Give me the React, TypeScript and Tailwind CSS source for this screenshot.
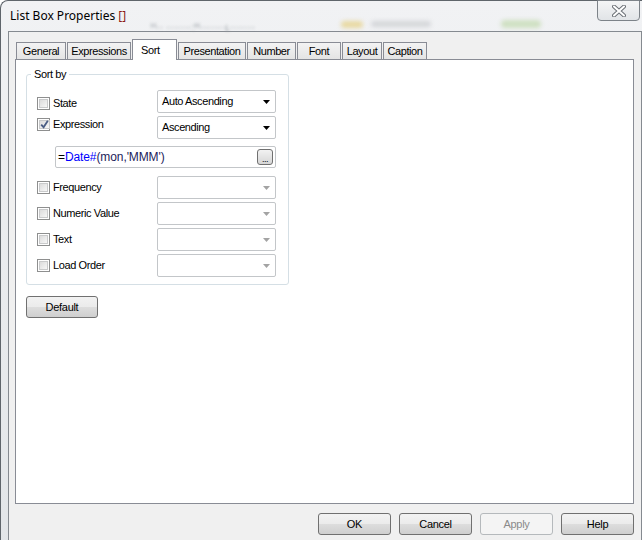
import React from 'react';

const ui = { fontFamily: '"Liberation Sans", Arial, sans-serif' };

const tabs = [
  { label: 'General', w: 'w-[50px]' },
  { label: 'Expressions', w: 'w-[64px]' },
  { label: 'Sort', w: 'w-[45px]', active: true },
  { label: 'Presentation', w: 'w-[68px]' },
  { label: 'Number', w: 'w-[49px]' },
  { label: 'Font', w: 'w-[44px]' },
  { label: 'Layout', w: 'w-[40px]' },
  { label: 'Caption', w: 'w-[44px]' },
];

function Checkbox({ checked }: { checked?: boolean }) {
  return (
    <span className="w-[13px] h-[13px] border border-[#8e8f8f] bg-white p-px shrink-0 flex">
      <span className="flex-1 flex items-center justify-center border border-[#c9cacb] bg-gradient-to-br from-[#dcdcdc] to-[#f7f7f7]">
        {checked && (
          <svg width="9" height="9" viewBox="0 0 9 9">
            <path d="M1.2 4.6 L3.6 7.2 L7.8 0.8" fill="none" stroke="#4a5d84" strokeWidth="1.8" />
          </svg>
        )}
      </span>
    </span>
  );
}

function CheckRow({ label, checked }: { label: string; checked?: boolean }) {
  return (
    <div className="flex items-center gap-[3px] h-[13px]">
      <Checkbox checked={checked} />
      <span className="text-[11px] tracking-[-0.4px] leading-[13px] text-black">{label}</span>
    </div>
  );
}

function Combo({ value, disabled }: { value?: string; disabled?: boolean }) {
  return (
    <div className="w-[119px] h-[23px] border border-[#c3c6c9] rounded-[2px] bg-white flex items-center pl-[4px] pr-[5px] shrink-0">
      <span className="flex-1 text-[11px] tracking-[-0.4px] text-black">{value}</span>
      <svg width="7" height="4" viewBox="0 0 7 4">
        <path d="M0 0 H7 L3.5 4 Z" fill={disabled ? '#a3a3a3' : '#000'} />
      </svg>
    </div>
  );
}

function Button({ label, disabled, w = 'w-[73px]' }: { label: string; disabled?: boolean; w?: string }) {
  return (
    <div
      className={`${w} h-[22px] rounded-[3px] border flex items-center justify-center text-[11px] tracking-[-0.3px] ${
        disabled
          ? 'border-[#b5b9bc] bg-[#f4f4f4] text-[#8a8a8a]'
          : 'border-[#707070] bg-[linear-gradient(#f2f2f2_0%,#ebebeb_50%,#dddddd_51%,#cfcfcf_100%)] text-black'
      }`}
    >
      {label}
    </div>
  );
}

export default function App() {
  return (
    <div className="w-[642px] h-[540px] overflow-hidden bg-white" style={ui}>
      <div className="w-[652px] h-[560px] rounded-tl-[8px] border-l border-t border-[#5f656b] bg-[linear-gradient(#f1f2f4,#e2e5e8)] flex flex-col">
        {/* title bar */}
        <div className="h-[30px] flex items-start relative">
          <div className="pl-[9px] pt-[7px] text-[12px] leading-[16px] text-black" style={{ fontFamily: '"Noto Sans", "Open Sans", sans-serif' }}>
            List Box Properties <span className="text-[#8b1a1a]">[]</span>
          </div>
          <div className="absolute left-[150px] top-[18px] text-[11px] text-[#9aa0a6] blur-[1.5px]">ᴴ·· ·······:ᴴ·······ʟ·······</div>
          <div className="absolute left-[340px] top-[20px] w-[22px] h-[7px] rounded-full bg-[#e8d9a2] blur-[2px]" />
          <div className="absolute left-[370px] top-[20px] w-[60px] h-[6px] rounded-full bg-[#d4d6d9] blur-[2px]" />
          <div className="absolute left-[500px] top-[19px] w-[40px] h-[8px] rounded-full bg-[#cfe0c2] blur-[2px]" />
          <div className="ml-auto mr-[12px] w-[43px] h-[21px] -mt-px rounded-b-[4px] border border-[#7d8389] bg-[linear-gradient(#f4f5f6,#e1e4e7)] flex items-center justify-center">
            <svg width="14" height="12" viewBox="0 0 14 12">
              <path d="M2 1.5 L12 10.5 M12 1.5 L2 10.5" stroke="#6b7076" strokeWidth="4" strokeLinecap="round" />
              <path d="M2 1.5 L12 10.5 M12 1.5 L2 10.5" stroke="#fff" strokeWidth="2" strokeLinecap="round" />
            </svg>
          </div>
        </div>

        {/* client area */}
        <div className="ml-[7px] w-[634px] flex-1 border-l border-t border-r border-[#858a90] bg-[#f0f0f0] pl-[6px] pt-[7px]">
          {/* tabs */}
          <div className="flex items-end gap-px pl-px h-[21px] relative z-10 -mb-px">
            {tabs.map((t) =>
              t.active ? (
                <div
                  key={t.label}
                  className={`${t.w} h-[21px] bg-white border border-b-0 border-[#898c95] text-[11px] tracking-[-0.4px] pl-[8px] pt-[2px] text-black`}
                >
                  {t.label}
                </div>
              ) : (
                <div
                  key={t.label}
                  className={`${t.w} h-[18px] border border-[#898c95] bg-[linear-gradient(#f3f3f3,#e4e4e4)] text-[11px] tracking-[-0.4px] flex items-center justify-center text-black`}
                >
                  {t.label}
                </div>
              )
            )}
          </div>

          {/* panel */}
          <div className="w-[619px] h-[445px] border border-[#898c95] bg-white pl-[10px] pt-[8px]">
            <fieldset className="w-[263px] border border-[#d5dfe5] rounded-[3px] pl-[10px] pr-[11px] pb-[7px]">
              <legend className="-ml-[6px] px-[3px] text-[11px] tracking-[-0.4px] leading-[13px] text-black">Sort by</legend>

              <div className="flex pt-[9px]">
                <div className="w-[120px] flex flex-col pt-[7px] gap-[8px]">
                  <CheckRow label="State" />
                  <CheckRow label="Expression" checked />
                </div>
                <div className="flex flex-col gap-[3px]">
                  <Combo value="Auto Ascending" />
                  <Combo value="Ascending" />
                </div>
              </div>

              <div className="ml-[18px] mt-[7px] w-[221px] h-[22px] border border-[#c3c6c9] rounded-[2px] bg-white flex items-center pl-[2px] pr-[2px]">
                <span className="flex-1 text-[12px] tracking-[-0.1px]">
                  <span className="text-black">=</span>
                  <span className="text-[#0000ff]">Date#</span>
                  <span className="text-[#1c1c5a]">(mon,'MMM')</span>
                </span>
                <div className="w-[16px] h-[16px] rounded-[3px] border border-[#707070] bg-[linear-gradient(#f2f2f2,#d6d6d6)] flex items-end justify-center pb-[2px]">
                  <span className="text-[9px] leading-[6px] tracking-[-0.5px]">...</span>
                </div>
              </div>

              <div className="flex flex-col gap-[3px] mt-[8px]">
                {['Frequency', 'Numeric Value', 'Text', 'Load Order'].map((l) => (
                  <div key={l} className="flex items-center">
                    <div className="w-[120px]">
                      <CheckRow label={l} />
                    </div>
                    <Combo disabled />
                  </div>
                ))}
              </div>
            </fieldset>

            <div className="mt-[11px]">
              <Button label="Default" w="w-[72px]" />
            </div>
          </div>

          {/* bottom buttons */}
          <div className="w-[619px] flex justify-end gap-[8px] mt-[9px]">
            <Button label="OK" />
            <Button label="Cancel" />
            <Button label="Apply" disabled />
            <Button label="Help" />
          </div>
        </div>
      </div>
    </div>
  );
}
